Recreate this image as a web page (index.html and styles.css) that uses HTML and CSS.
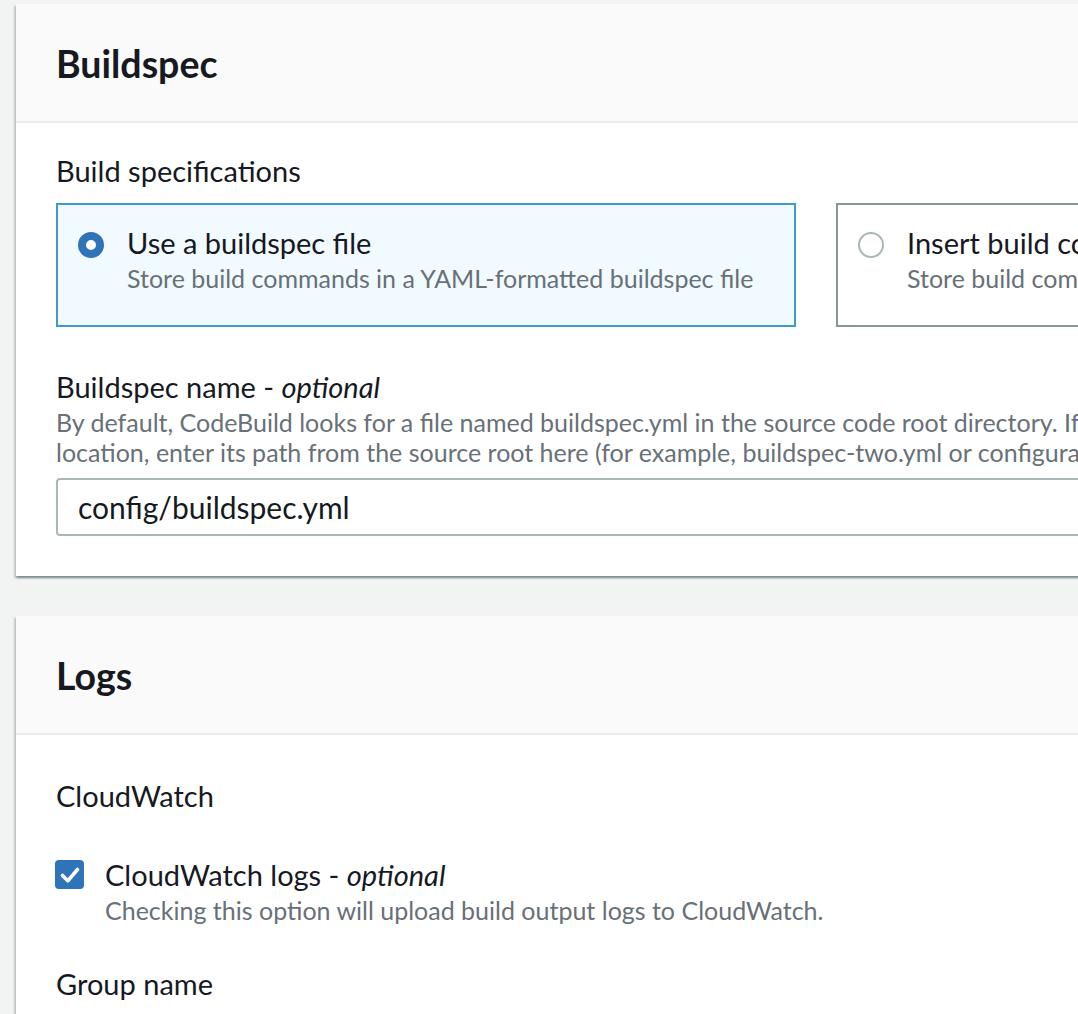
FILE: index.html
```html
<!DOCTYPE html>
<html lang="en">
<head>
<meta charset="utf-8">
<title>Buildspec</title>
<link rel="stylesheet" href="styles.css">
</head>
<body>
<div class="page">
  <section class="card">
    <header class="card-header"><h2>Buildspec</h2></header>
    <div class="card-body">
      <div class="label first">Build specifications</div>
      <div class="tiles">
        <div class="tile selected">
          <span class="radio on"></span>
          <div class="tile-text">
            <div class="tile-title">Use a buildspec file</div>
            <div class="desc">Store build commands in a YAML-formatted buildspec file</div>
          </div>
        </div>
        <div class="tile">
          <span class="radio"></span>
          <div class="tile-text">
            <div class="tile-title">Insert build commands</div>
            <div class="desc">Store build commands as build project configuration</div>
          </div>
        </div>
      </div>
      <div class="field">
        <div class="label">Buildspec name - <i>optional</i></div>
        <div class="desc">By default, CodeBuild looks for a file named buildspec.yml in the source code root directory. If your buildspec file uses a different name or<br>location, enter its path from the source root here (for example, buildspec-two.yml or configuration/buildspec.yml).</div>
        <div class="input">config/buildspec.yml</div>
      </div>
    </div>
  </section>

  <section class="card">
    <header class="card-header"><h2>Logs</h2></header>
    <div class="card-body logs">
      <div class="label">CloudWatch</div>
      <div class="check-row">
        <span class="checkbox">
          <svg viewBox="0 0 28 28" width="28" height="28"><path d="M6.5 14.5 L11.8 19.8 L21.5 8.5" fill="none" stroke="#fff" stroke-width="3.6" stroke-linecap="round" stroke-linejoin="round"/></svg>
        </span>
        <div class="tile-text">
          <div class="tile-title">CloudWatch logs - <i>optional</i></div>
          <div class="desc">Checking this option will upload build output logs to CloudWatch.</div>
        </div>
      </div>
      <div class="label group">Group name</div>
    </div>
  </section>
</div>
</body>
</html>
```

FILE: styles.css
```css
html, body {
  margin: 0;
  padding: 0;
  overflow: hidden;
  background: #f2f3f3;
}

body {
  font-family: Lato, "Liberation Sans", sans-serif;
  color: #16191f;
}

.page {
  padding: 4px 0 0 16px;
  width: 1640px;
  display: flex;
  flex-direction: column;
  gap: 40px;
}

.card {
  background: #fff;
  box-shadow: 0 2px 2px 0 rgba(0, 28, 36, 0.3), 2px 2px 2px 0 rgba(0, 28, 36, 0.15), -2px 2px 2px 0 rgba(0, 28, 36, 0.15);
}

.card-header {
  background: #fafafa;
  height: 117px;
  border-bottom: 2px solid #eaeded;
  padding: 0 40px;
  display: flex;
  align-items: center;
}

.card-header h2 {
  margin: 2px 0 0;
  font-size: 37.5px;
  font-weight: 700;
  line-height: 44px;
}

.card-body {
  padding: 30px 40px 40px;
}

.label {
  font-size: 29px;
  line-height: 40px;
}

.label.first {
  margin-top: -2px;
}

.label i, .tile-title i {
  font-style: italic;
}

.desc {
  font-size: 25px;
  line-height: 30px;
  color: #687078;
  white-space: nowrap;
}

.tiles {
  margin-top: 12px;
  display: grid;
  grid-template-columns: 740px 740px;
  gap: 40px;
}

.tile {
  box-sizing: border-box;
  height: 124px;
  border: 2px solid #879596;
  padding: 18px 20px 0;
  display: flex;
  gap: 23px;
}

.tile.selected {
  border-color: #3f9bc8;
  background: #f1faff;
}

.tile-title {
  font-size: 29px;
  line-height: 40px;
  white-space: nowrap;
}

.radio {
  flex: none;
  box-sizing: border-box;
  width: 26px;
  height: 26px;
  margin-top: 9px;
  border-radius: 50%;
  border: 2px solid #aab7b8;
  background: #fff;
}

.radio.on {
  border: 8.5px solid #2f73b8;
}

.field {
  margin-top: 40px;
}

.input {
  margin-top: 11px;
  box-sizing: border-box;
  height: 58px;
  border: 2px solid #aab7b8;
  border-radius: 4px;
  padding: 0 20px;
  font-size: 30px;
  display: flex;
  align-items: center;
  background: #fff;
}

.card-body.logs {
  padding-top: 41px;
}

.check-row {
  margin-top: 39px;
  display: flex;
  gap: 21px;
}

.checkbox {
  flex: none;
  width: 29px;
  height: 29px;
  margin-top: 5px;
  margin-left: -1px;
  border-radius: 4px;
  background: #2f73b8;
  display: flex;
  align-items: center;
  justify-content: center;
}

.label.group {
  margin-top: 39px;
}
```
